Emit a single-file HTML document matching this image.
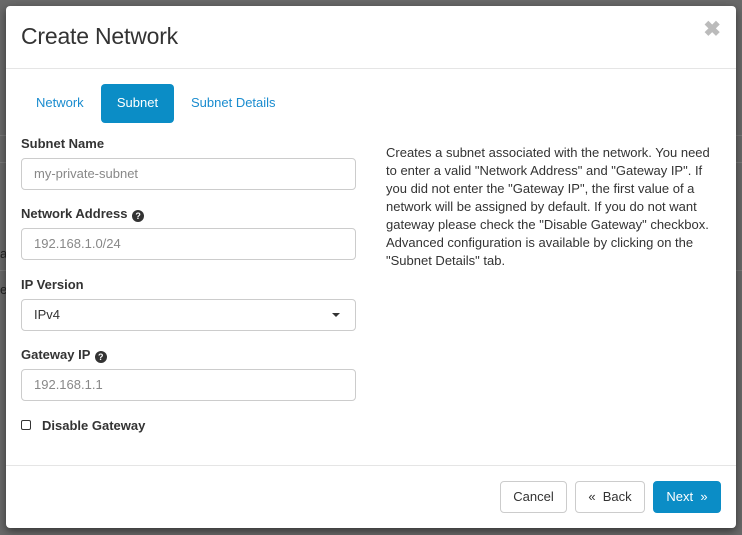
<!DOCTYPE html>
<html><head><style>
body{margin:0;width:742px;height:535px;background:#696969;font-family:"Liberation Sans",sans-serif;position:relative;overflow:hidden;color:#333}
.bgl{position:absolute;left:0;background:#7a7a7a;height:1px;width:742px}
.m{position:absolute;left:6px;top:6px;width:730px;height:522px;background:#fff;border-radius:4px;box-shadow:0 3px 9px rgba(0,0,0,.5)}
.a{position:absolute}
h1{position:absolute;left:15px;top:17px;margin:0;font-size:23px;font-weight:normal;color:#333;letter-spacing:-0.2px}
.x{position:absolute;right:15px;top:11px;font-size:21px;color:#bbb;font-weight:bold}
.hr{position:absolute;left:0;width:730px;height:1px;background:#e5e5e5}
.tab{position:absolute;top:78px;height:39px;line-height:38px;font-size:13px;color:#1a8ccf}
.tab.on{background:#0b8dc6;color:#fff;border-radius:4px;width:73px;text-align:center}
.lbl{position:absolute;left:15px;font-size:13px;font-weight:bold;color:#333}
.in{position:absolute;left:15px;width:321px;height:30px;border:1px solid #ccc;border-radius:4px;font-size:13px;color:#888;line-height:30px;padding-left:12px;box-sizing:content-box}
.q{display:inline-block;width:12px;height:12px;border-radius:50%;background:#333;color:#fff;font-size:9px;line-height:12px;text-align:center;vertical-align:-1px;margin-left:1px}
.desc{position:absolute;left:380px;top:138px;width:335px;font-size:13px;line-height:18px;color:#333}
.btn{position:absolute;top:475px;height:30px;border:1px solid #ccc;border-radius:4px;font-size:13px;line-height:30px;text-align:center;color:#333;background:#fff}
</style></head><body>
<div class="bgl" style="top:135px"></div><div class="bgl" style="top:162px"></div><div class="bgl" style="top:270px"></div>
<div class="a" style="left:0;top:246px;font-size:13px;color:#222">a</div>
<div class="a" style="left:0;top:282px;font-size:13px;color:#222">e</div>
<div class="m">
<h1>Create Network</h1><div class="x">✖</div>
<div class="hr" style="top:62px"></div>
<div class="tab" style="left:30px">Network</div>
<div class="tab on" style="left:95px">Subnet</div>
<div class="tab" style="left:185px">Subnet Details</div>
<div class="lbl" style="top:130px">Subnet Name</div>
<div class="in" style="top:152px">my-private-subnet</div>
<div class="lbl" style="top:200px">Network Address <span class="q">?</span></div>
<div class="in" style="top:222px">192.168.1.0/24</div>
<div class="lbl" style="top:271px">IP Version</div>
<div class="in" style="top:293px;color:#333">IPv4<span style="position:absolute;right:15px;top:13px;border-left:4px solid transparent;border-right:4px solid transparent;border-top:4px solid #333"></span></div>
<div class="lbl" style="top:341px">Gateway IP <span class="q">?</span></div>
<div class="in" style="top:363px">192.168.1.1</div>
<div class="a" style="left:15px;top:414px;width:8px;height:8px;border:1px solid #333;border-radius:2px"></div>
<div class="lbl" style="left:36px;top:412px">Disable Gateway</div>
<div class="desc">Creates a subnet associated with the network. You need to enter a valid "Network Address" and "Gateway IP". If you did not enter the "Gateway IP", the first value of a network will be assigned by default. If you do not want gateway please check the "Disable Gateway" checkbox. Advanced configuration is available by clicking on the "Subnet Details" tab.</div>
<div class="hr" style="top:459px"></div>
<div class="btn" style="left:494px;width:65px;top:475px">Cancel</div>
<div class="btn" style="left:569px;width:68px;top:475px">«&nbsp; Back</div>
<div class="btn" style="left:647px;width:66px;top:475px;background:#0b8dc6;border-color:#0b8dc6;color:#fff">Next &nbsp;»</div>
</div>
</body></html>
